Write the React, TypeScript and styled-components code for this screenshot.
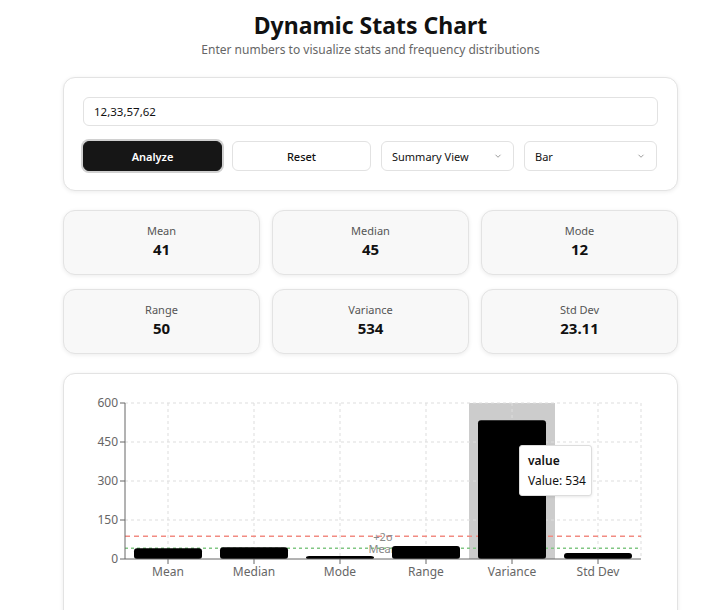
import React from "react";
import styled, { createGlobalStyle } from "styled-components";

const Global = createGlobalStyle`
  body { margin: 0; background: #fff; font-family: "Noto Sans", "Open Sans", sans-serif; color: #111; }
`;
const Page = styled.div`width: 615px; margin-left: 63px; padding-top: 9px;`;
const Title = styled.h1`margin: 0; text-align: center; font-size: 23px; font-weight: 700; line-height: 32px;`;
const Sub = styled.p`margin: 0; text-align: center; font-size: 12px; color: #666; line-height: 18px;`;
const Card = styled.div<{ $pad?: string }>`
  border: 1px solid #e3e3e3; border-radius: 12px; background: #fff;
  box-shadow: 0 1px 4px rgba(0,0,0,0.08); padding: ${p => p.$pad || "19px"};
  box-sizing: border-box;
`;
const Controls = styled(Card)`margin-top: 18px; height: 114px;`;
const Input = styled.div`
  height: 29px; border: 1px solid #e2e2e2; border-radius: 6px; box-sizing: border-box;
  font-size: 11.5px; display: flex; align-items: center; padding: 0 10px;
`;
const Row = styled.div`display: grid; grid-template-columns: 139px 139px 133px 133px; gap: 10px; margin-top: 15px;`;
const Btn = styled.div<{ $dark?: boolean }>`
  height: 30px; border-radius: 6px; box-sizing: border-box; display: flex; align-items: center;
  justify-content: center; font-size: 11px; font-weight: ${p => (p.$dark ? 600 : 500)};
  background: ${p => (p.$dark ? "#161616" : "#fff")}; color: ${p => (p.$dark ? "#fff" : "#111")};
  border: 1px solid ${p => (p.$dark ? "#161616" : "#e2e2e2")};
  box-shadow: ${p => (p.$dark ? "0 0 0 2px #d0d0d0" : "none")};
`;
const Select = styled(Btn)`justify-content: space-between; padding: 0 10px; font-weight: 400;`;
const Stats = styled.div`display: grid; grid-template-columns: repeat(3, 1fr); column-gap: 12px; row-gap: 14px; margin-top: 19px;`;
const Stat = styled(Card)`
  height: 65px; background: #f8f8f8; padding: 0 0 3px; display: flex; flex-direction: column;
  align-items: center; justify-content: center; gap: 1px;
`;
const Label = styled.div`font-size: 11px; color: #555;`;
const Value = styled.div`font-size: 15px; font-weight: 700;`;
const ChartCard = styled(Card)`margin-top: 19px; height: 250px; padding: 0; position: relative;`;
const Tip = styled.div`
  position: absolute; left: 455px; top: 71px; width: 73px; height: 51px; box-sizing: border-box;
  background: #fff; border: 1px solid #ddd; border-radius: 3px; padding: 6px 8px; font-size: 12px;
  white-space: nowrap; box-shadow: 0 1px 3px rgba(0,0,0,0.1);
`;
const TipTitle = styled.div`font-weight: 600; margin-bottom: 3px;`;

const Chev = () => (
  <svg width="10" height="10" viewBox="0 0 24 24" fill="none" stroke="#888" strokeWidth="2"><path d="m6 9 6 6 6-6" /></svg>
);

const stats = [["Mean", "41"], ["Median", "45"], ["Mode", "12"], ["Range", "50"], ["Variance", "534"], ["Std Dev", "23.11"]];
const vals = [41, 45, 12, 50, 534, 23.11];

function Chart() {
  const x0 = 61, x1 = 577, yT = 29, yB = 185;
  const w = (x1 - x0) / 6;
  const y = (v: number) => yB - (v / 600) * (yB - yT);
  return (
    <svg width="615" height="250" style={{ display: "block" }} fontFamily="Noto Sans, sans-serif">
      <rect x={x0 + 4 * w} y={yT} width={w} height={yB - yT} fill="#cccccc" />
      {[0, 150, 300, 450, 600].map(v => (
        <g key={v}>
          {v > 0 && <line x1={x0} x2={x1} y1={y(v)} y2={y(v)} stroke="#ddd" strokeDasharray="3 3" />}
          <line x1={x0 - 5} x2={x0} y1={y(v)} y2={y(v)} stroke="#666" />
          <text x={x0 - 7} y={y(v) + 4} textAnchor="end" fontSize="12" fill="#666">{v}</text>
        </g>
      ))}
      {[0, 1, 2, 3, 4, 5].map(i => (
        <line key={i} x1={x0 + i * w + w / 2} x2={x0 + i * w + w / 2} y1={yT} y2={yB} stroke="#ddd" strokeDasharray="3 3" />
      ))}
      <line x1={x1} x2={x1} y1={yT} y2={yB} stroke="#ddd" strokeDasharray="3 3" />
      <line x1={x0} x2={x1} y1={y(87.2)} y2={y(87.2)} stroke="#f28b82" strokeWidth="1.5" strokeDasharray="5 4" />
      <line x1={x0} x2={x1} y1={y(41)} y2={y(41)} stroke="#81c784" strokeWidth="1.5" strokeDasharray="3 3" />
      <text x={(x0 + x1) / 2} y={y(87.2) + 5} textAnchor="middle" fontSize="11" fill="#888">+2σ</text>
      <text x={(x0 + x1) / 2} y={y(41) + 5} textAnchor="middle" fontSize="11" fill="#888">Mean</text>
      {vals.map((v, i) => (
        <rect key={i} x={x0 + i * w + 9} y={y(v)} width={w - 18} height={yB - y(v)} rx="3" fill="#000" />
      ))}
      <line x1={x0} x2={x0} y1={yT} y2={yB} stroke="#666" />
      <line x1={x0} x2={x1} y1={yB} y2={yB} stroke="#666" />
      {stats.map(([l], i) => (
        <g key={l}>
          <line x1={x0 + i * w + w / 2} x2={x0 + i * w + w / 2} y1={yB} y2={yB + 5} stroke="#666" />
          <text x={x0 + i * w + w / 2} y={yB + 17} textAnchor="middle" fontSize="12" fill="#666">{l}</text>
        </g>
      ))}
    </svg>
  );
}

export default function App() {
  return (
    <>
      <Global />
      <Page>
        <Title>Dynamic Stats Chart</Title>
        <Sub>Enter numbers to visualize stats and frequency distributions</Sub>
        <Controls>
          <Input>12,33,57,62</Input>
          <Row>
            <Btn $dark>Analyze</Btn>
            <Btn>Reset</Btn>
            <Select>Summary View<Chev /></Select>
            <Select>Bar<Chev /></Select>
          </Row>
        </Controls>
        <Stats>
          {stats.map(([l, v]) => (
            <Stat key={l}><Label>{l}</Label><Value>{v}</Value></Stat>
          ))}
        </Stats>
        <ChartCard>
          <Chart />
          <Tip><TipTitle>value</TipTitle>Value: 534</Tip>
        </ChartCard>
      </Page>
    </>
  );
}
